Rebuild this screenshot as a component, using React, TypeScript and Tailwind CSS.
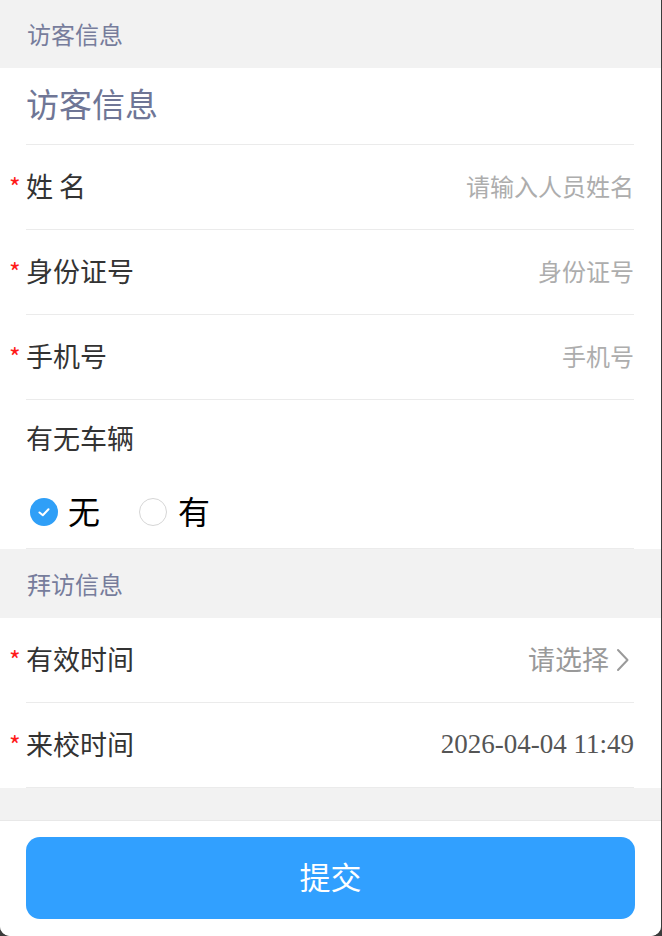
const FONT = { fontFamily: '"Noto Sans CJK SC", "Noto Sans", sans-serif' };

function Field({ label, children }: { label: string; children?: React.ReactNode }) {
    return (
        <div className="pl-[26px]">
            <div className="h-[85px] mr-[27px] flex items-center justify-between border-b border-[#ebebeb]">
                <div className="flex items-center">
                    <span className="-ml-[17px] w-[17px] text-[25px] leading-none text-[#ff1a1a] -mt-[2px]">*</span>
                    <span className="text-[27px] leading-none text-[#333333] -mt-[3px]">{label}</span>
                </div>
                {children}
            </div>
        </div>
    );
}

export default function App() {
    return (
        <div className="w-[662px] h-[936px] bg-[#3b3b3b] flex" style={FONT}>
            <div className="w-[661px] h-[936px] bg-[#f2f2f2] rounded-b-[10px] overflow-hidden flex flex-col">
                {/* 访客信息 section */}
                <div className="h-[68px] px-[27px] flex items-center text-[24px] leading-none text-[#777d9c]">访客信息</div>
                <div className="bg-white">
                    <div className="pl-[26px]">
                        <div className="h-[77px] mr-[27px] flex items-center border-b border-[#ebebeb] text-[33px] leading-none text-[#6f7696]">
                            <span className="-mt-[6px]">访客信息</span>
                        </div>
                    </div>
                    <Field label="姓 名">
                        <span className="text-[24px] leading-none text-[#adadad] -mt-[3px]">请输入人员姓名</span>
                    </Field>
                    <Field label="身份证号">
                        <span className="text-[24px] leading-none text-[#adadad] -mt-[3px]">身份证号</span>
                    </Field>
                    <Field label="手机号">
                        <span className="text-[24px] leading-none text-[#adadad] -mt-[3px]">手机号</span>
                    </Field>
                    <div className="pl-[26px]">
                        <div className="mr-[27px] border-b border-[#ebebeb]">
                            <div className="h-[76px] flex items-center text-[27px] leading-none text-[#333333]">
                                <span className="-mt-[2px]">有无车辆</span>
                            </div>
                            <div className="h-[72px] flex items-center pl-[4px]">
                                <div className="flex items-center">
                                    <span className="w-[28px] h-[28px] rounded-full bg-[#2f9ff7] flex items-center justify-center">
                                        <svg width="16" height="16" viewBox="0 0 16 16" fill="none">
                                            <path d="M3.5 8.5 L6.8 11.2 L12.5 5.2" stroke="white" strokeWidth="2" strokeLinecap="round" strokeLinejoin="round" />
                                        </svg>
                                    </span>
                                    <span className="ml-[10px] text-[32px] text-black leading-none -mt-[4px]">无</span>
                                </div>
                                <div className="flex items-center ml-[39px]">
                                    <span className="w-[28px] h-[28px] rounded-full border border-[#d6d6d6] bg-white" />
                                    <span className="ml-[11px] text-[32px] text-black leading-none -mt-[4px]">有</span>
                                </div>
                            </div>
                        </div>
                    </div>
                </div>

                {/* 拜访信息 section */}
                <div className="h-[69px] px-[27px] flex items-center text-[24px] leading-none text-[#777d9c]">拜访信息</div>
                <div className="bg-white">
                    <Field label="有效时间">
                        <span className="flex items-center text-[27px] leading-none text-[#999999]">
                            <span className="-mt-[3px]">请选择</span>
                            <svg width="14" height="24" viewBox="0 0 14 24" fill="none" className="ml-[7px] mr-[4px] -mt-[1px]">
                                <path d="M2 2 L11.5 12 L2 22" stroke="#9a9a9a" strokeWidth="2" strokeLinecap="round" strokeLinejoin="round" />
                            </svg>
                        </span>
                    </Field>
                    <Field label="来校时间">
                        <span className="text-[27px] leading-none text-[#555555] -mt-[2px]" style={{ fontFamily: '"Liberation Serif", serif' }}>
                            2026-04-04 11:49
                        </span>
                    </Field>
                </div>

                <div className="flex-1" />

                {/* footer */}
                <div className="h-[116px] bg-white border-t border-[#e8e8e8] px-[26px] pt-[16px]">
                    <button className="w-full h-[82px] rounded-[14px] bg-[#31a0ff] text-white text-[31px] leading-none">
                        <span className="relative -top-[3px]">提交</span>
                    </button>
                </div>
            </div>
        </div>
    );
}
